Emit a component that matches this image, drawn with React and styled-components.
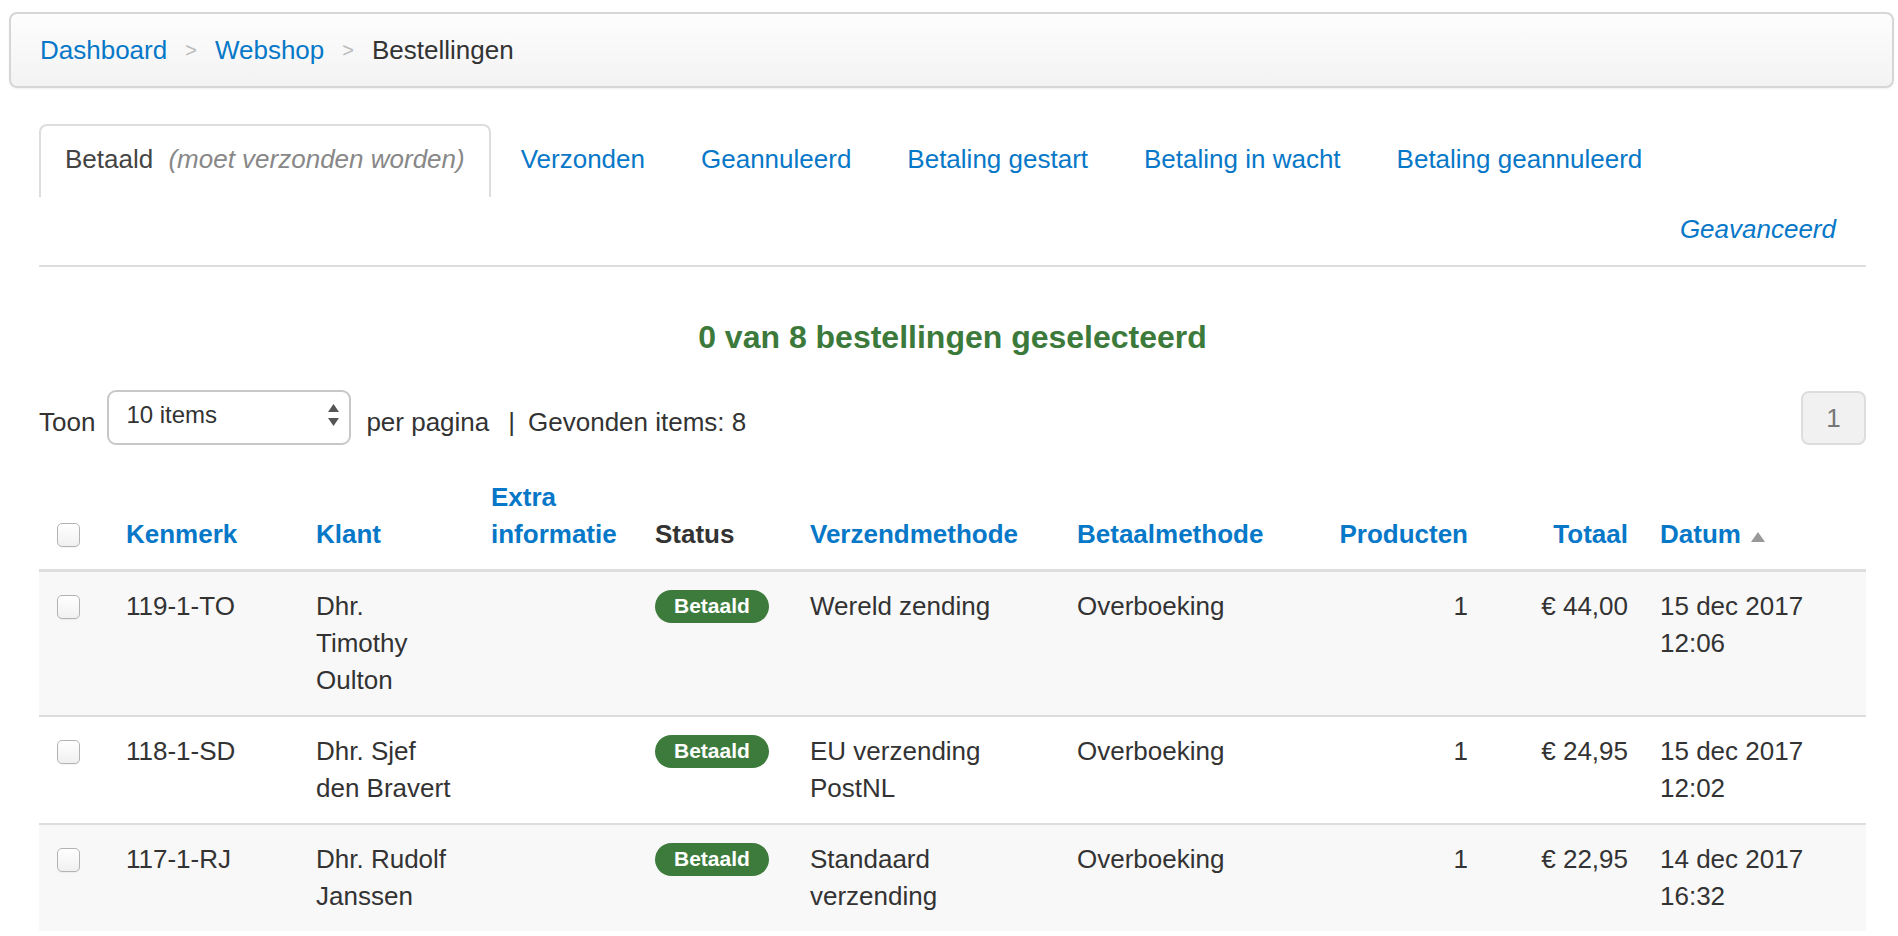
import React from "react";
import styled, { createGlobalStyle } from "styled-components";

const GlobalStyle = createGlobalStyle`
  body {
    margin: 0;
    background: #fff;
    color: #333;
    font-family: "Liberation Sans", Helvetica, Arial, sans-serif;
    font-size: 26px;
    line-height: 37px;
  }
`;

const LINK = "#0778c8";

const Page = styled.div`
  padding: 12px 4px 40px 9px;
`;

const Breadcrumb = styled.nav`
  display: flex;
  align-items: center;
  height: 72px;
  padding: 0 29px;
  border: 2px solid #d6d6d6;
  border-radius: 8px;
  background: linear-gradient(to bottom, #fdfdfd, #f3f3f3);
  box-shadow: 0 1px 2px rgba(0, 0, 0, 0.06);
`;

const Crumb = styled.a`
  color: ${(p) => (p.$current ? "#333" : LINK)};
  text-decoration: none;
`;

const CrumbSep = styled.span`
  color: #bbb;
  font-size: 20px;
  margin: 0 18px;
`;

const Content = styled.div`
  padding: 0 28px 0 30px;
`;

const Nav = styled.div`
  margin-top: 36px;
  border-bottom: 2px solid #ddd;
  padding-bottom: 17px;
`;

const TabBar = styled.ul`
  display: flex;
  margin: 0;
  padding: 0;
  list-style: none;
`;

const Tab = styled.li`
  margin-right: 4px;
  padding: 15px 24px 19px;
  border: 2px solid ${(p) => (p.$active ? "#ddd" : "transparent")};
  border-bottom: none;
  border-radius: 8px 8px 0 0;
  color: ${(p) => (p.$active ? "#444" : LINK)};
`;

const TabNote = styled.em`
  margin-left: 8px;
  color: #888;
`;

const AdvancedRow = styled.div`
  margin-top: 14px;
  padding-right: 30px;
  text-align: right;
`;

const AdvancedLink = styled.a`
  color: ${LINK};
  font-style: italic;
  text-decoration: none;
`;

const Summary = styled.h3`
  margin: 50px 0 0;
  text-align: center;
  font-size: 32px;
  line-height: 40px;
  font-weight: bold;
  color: #3b7a3b;
`;

const Toolbar = styled.div`
  display: flex;
  align-items: center;
  justify-content: space-between;
  margin-top: 34px;
`;

const ToolbarLeft = styled.div`
  display: flex;
  align-items: center;
  padding-top: 8px;
`;

const SelectBox = styled.div`
  display: flex;
  align-items: center;
  justify-content: space-between;
  box-sizing: border-box;
  width: 244px;
  height: 55px;
  margin: -10px 15px 0 12px;
  padding: 0 10px 5px 17px;
  border: 2px solid #c8c8c8;
  border-radius: 9px;
  background: #fff;
  font-size: 24px;
  color: #333;
`;

const Divider = styled.span`
  margin: 0 13px 0 19px;
`;

const PageButton = styled.div`
  display: flex;
  align-items: center;
  justify-content: center;
  box-sizing: border-box;
  width: 65px;
  height: 54px;
  border: 2px solid #ddd;
  border-radius: 8px;
  background: #f1f1f1;
  color: #777;
`;

const Table = styled.table`
  width: 100%;
  margin-top: 18px;
  border-collapse: collapse;
  table-layout: fixed;
`;

const Th = styled.th`
  padding: 16px;
  vertical-align: bottom;
  text-align: ${(p) => (p.$right ? "right" : "left")};
  font-weight: bold;
  color: ${(p) => (p.$plain ? "#333" : LINK)};
  border-bottom: 3px solid #ddd;
  white-space: ${(p) => (p.$nowrap ? "nowrap" : "normal")};
`;

const Row = styled.tr`
  background: ${(p) => (p.$striped ? "#f8f8f8" : "#fff")};
  border-top: 2px solid #ddd;
`;

const Td = styled.td`
  padding: 16px;
  vertical-align: top;
  text-align: ${(p) => (p.$right ? "right" : "left")};
`;

const CheckWrap = styled.div`
  display: flex;
  align-items: center;
  height: 37px;
  padding-left: 2px;
`;

const Checkbox = styled.span`
  display: inline-block;
  box-sizing: border-box;
  width: 23px;
  height: 24px;
  border: 1.5px solid #b3b3b3;
  border-radius: 5px;
  background: linear-gradient(to bottom, #fff, #f0f0f0);
  box-shadow: 0 1px 1px rgba(0, 0, 0, 0.05);
`;

const Badge = styled.span`
  display: inline-block;
  margin-top: 2px;
  padding: 6px 19px 7px;
  border-radius: 17px;
  background: #3c7b3c;
  color: #fff;
  font-size: 21px;
  font-weight: bold;
  line-height: 20px;
  vertical-align: top;
`;

const SortArrow = styled.svg`
  margin-left: 10px;
  vertical-align: 1px;
`;

const SelectArrows = () => (
  <svg width="11" height="22" viewBox="0 0 11 22">
    <path d="M5.5 0 L11 8 L0 8 Z" fill="#555" />
    <path d="M0 14 L11 14 L5.5 22 Z" fill="#555" />
  </svg>
);

const orders = [
  {
    ref: "119-1-TO",
    client: "Dhr. Timothy Oulton",
    shipping: "Wereld zending",
    payment: "Overboeking",
    products: 1,
    total: "€ 44,00",
    date: "15 dec 2017 12:06",
  },
  {
    ref: "118-1-SD",
    client: "Dhr. Sjef den Bravert",
    shipping: "EU verzending PostNL",
    payment: "Overboeking",
    products: 1,
    total: "€ 24,95",
    date: "15 dec 2017 12:02",
  },
  {
    ref: "117-1-RJ",
    client: "Dhr. Rudolf Janssen",
    shipping: "Standaard verzending",
    payment: "Overboeking",
    products: 1,
    total: "€ 22,95",
    date: "14 dec 2017 16:32",
  },
];

const tabs = [
  "Verzonden",
  "Geannuleerd",
  "Betaling gestart",
  "Betaling in wacht",
  "Betaling geannuleerd",
];

const App = () => {
  return (
    <Page>
      <GlobalStyle />
      <Breadcrumb>
        <Crumb href="#">Dashboard</Crumb>
        <CrumbSep>&gt;</CrumbSep>
        <Crumb href="#">Webshop</Crumb>
        <CrumbSep>&gt;</CrumbSep>
        <Crumb $current>Bestellingen</Crumb>
      </Breadcrumb>

      <Content>
        <Nav>
          <TabBar>
            <Tab $active>
              Betaald <TabNote>(moet verzonden worden)</TabNote>
            </Tab>
            {tabs.map((t) => (
              <Tab key={t}>{t}</Tab>
            ))}
          </TabBar>
          <AdvancedRow>
            <AdvancedLink href="#">Geavanceerd</AdvancedLink>
          </AdvancedRow>
        </Nav>

        <Summary>0 van 8 bestellingen geselecteerd</Summary>

        <Toolbar>
          <ToolbarLeft>
            Toon
            <SelectBox>
              10 items
              <SelectArrows />
            </SelectBox>
            per pagina
            <Divider>|</Divider>
            Gevonden items: 8
          </ToolbarLeft>
          <PageButton>1</PageButton>
        </Toolbar>

        <Table>
          <colgroup>
            <col style={{ width: 71 }} />
            <col style={{ width: 190 }} />
            <col style={{ width: 175 }} />
            <col style={{ width: 164 }} />
            <col style={{ width: 155 }} />
            <col style={{ width: 267 }} />
            <col style={{ width: 259 }} />
            <col style={{ width: 164 }} />
            <col style={{ width: 160 }} />
            <col />
          </colgroup>
          <thead>
            <tr>
              <Th>
                <CheckWrap>
                  <Checkbox />
                </CheckWrap>
              </Th>
              <Th>Kenmerk</Th>
              <Th>Klant</Th>
              <Th>Extra informatie</Th>
              <Th $plain>Status</Th>
              <Th>Verzendmethode</Th>
              <Th>Betaalmethode</Th>
              <Th $right>Producten</Th>
              <Th $right>Totaal</Th>
              <Th $nowrap>
                Datum
                <SortArrow width="14" height="10" viewBox="0 0 14 10">
                  <path d="M7 0 L14 10 L0 10 Z" fill="#999" />
                </SortArrow>
              </Th>
            </tr>
          </thead>
          <tbody>
            {orders.map((o, i) => (
              <Row key={o.ref} $striped={i % 2 === 0}>
                <Td>
                  <CheckWrap>
                    <Checkbox />
                  </CheckWrap>
                </Td>
                <Td>{o.ref}</Td>
                <Td>{o.client}</Td>
                <Td />
                <Td>
                  <Badge>Betaald</Badge>
                </Td>
                <Td>{o.shipping}</Td>
                <Td>{o.payment}</Td>
                <Td $right>{o.products}</Td>
                <Td $right>{o.total}</Td>
                <Td>{o.date}</Td>
              </Row>
            ))}
          </tbody>
        </Table>
      </Content>
    </Page>
  );
};

export default App;
